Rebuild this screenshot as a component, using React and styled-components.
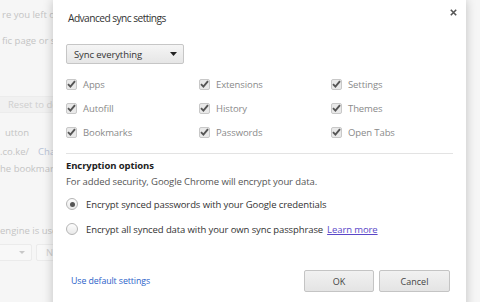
import React from "react";
import styled, { createGlobalStyle } from "styled-components";

const Global = createGlobalStyle`
  html, body { margin: 0; padding: 0; }
  body {
    background: #f5f5f5;
    font-family: "Open Sans", "Noto Sans", sans-serif;
  }
`;

const Screen = styled.div`
  position: relative;
  width: 480px;
  height: 302px;
  overflow: hidden;
  background: #f6f6f6;
`;

/* ---------- faded page behind the dialog ---------- */
const BackPage = styled.div`
  display: flex;
  flex-direction: column;
  width: 140px;
  padding-top: 9px;
  font-size: 9.5px;
  line-height: 12px;
  color: #c4c4c4;
  white-space: nowrap;
`;

const BackLine = styled.div`
  margin-top: ${(p) => p.$mt || 0}px;
  padding-left: ${(p) => p.$indent || 0}px;
`;

const BackLink = styled.span`
  color: #b9c3d6;
  margin-left: 9px;
`;

const BackButton = styled.div`
  margin-top: ${(p) => p.$mt || 0}px;
  height: 15px;
  line-height: 15px;
  background: #f1f1f1;
  border-top: 1px solid #ececec;
  border-bottom: 1px solid #ececec;
  padding-left: 8px;
  color: #cfcfcf;
`;

const BackControls = styled.div`
  display: flex;
  gap: 4px;
  margin-top: ${(p) => p.$mt || 0}px;
  margin-left: -6px;
`;

const BackSelect = styled.div`
  width: 38px;
  height: 17px;
  border: 1px solid #ebebeb;
  border-radius: 2px;
  background: #f8f8f8;
  display: flex;
  align-items: center;
  justify-content: flex-end;
  padding-right: 6px;
  box-sizing: border-box;
`;

const BackBtn = styled.div`
  width: 30px;
  height: 17px;
  border: 1px solid #ebebeb;
  border-radius: 2px;
  background: #f8f8f8;
  box-sizing: border-box;
  padding-left: 9px;
  line-height: 15px;
  color: #cfcfcf;
`;

/* ---------- dialog ---------- */
const Dialog = styled.div`
  position: absolute;
  left: 53px;
  top: 0;
  width: 413px;
  height: 320px;
  box-sizing: border-box;
  background: #fff;
  box-shadow: 0 0 10px rgba(0, 0, 0, 0.22);
  padding: 10px 13px 0 13px;
  display: flex;
  flex-direction: column;
  color: #333;
  font-size: 9.5px;
  letter-spacing: -0.1px;
`;

const Header = styled.div`
  display: flex;
  justify-content: space-between;
  align-items: flex-start;
`;

const Title = styled.div`
  font-size: 10.2px;
  letter-spacing: -0.55px;
  line-height: 16px;
  margin-left: 2px;
  color: #333;
`;

const Close = styled.svg`
  width: 7px;
  height: 7px;
  margin-top: -1px;
  margin-right: -4px;
`;

const Select = styled.div`
  margin-top: 18px;
  width: 118px;
  height: 20px;
  box-sizing: border-box;
  border: 1px solid #c6c6c6;
  border-radius: 2px;
  background: linear-gradient(#f5f5f5, #e6e6e6);
  display: flex;
  align-items: center;
  justify-content: space-between;
  padding: 0 6px 0 7px;
  color: #333;
`;

const Arrow = styled.svg`
  width: 7px;
  height: 4px;
`;

const Options = styled.div`
  margin-top: 8px;
  display: grid;
  grid-template-columns: 133px 132px 1fr;
  grid-auto-rows: 24px;
`;

const CheckItem = styled.label`
  display: flex;
  align-items: center;
  gap: 6px;
  color: #8a8a8a;
`;

const Box = styled.span`
  width: 11px;
  height: 11px;
  box-sizing: border-box;
  border: 1px solid #c8c8c8;
  border-radius: 2px;
  background: #e9e9e9;
  display: flex;
  align-items: center;
  justify-content: center;
`;

const Separator = styled.div`
  margin-top: 9px;
  height: 1px;
  background: #e3e3e3;
`;

const SectionTitle = styled.div`
  margin-top: 4px;
  line-height: 16px;
  font-weight: 700;
  color: #222;
`;

const Note = styled.div`
  line-height: 16px;
  color: #555;
`;

const RadioRow = styled.label`
  margin-top: ${(p) => p.$mt}px;
  height: 20px;
  display: flex;
  align-items: center;
  gap: 8px;
  color: #333;
`;

const Radio = styled.span`
  width: 12px;
  height: 12px;
  box-sizing: border-box;
  border-radius: 50%;
  border: 1px solid #b5b5b5;
  background: linear-gradient(#fdfdfd, #e9e9e9);
  display: flex;
  align-items: center;
  justify-content: center;
  &::after {
    content: "";
    width: 5px;
    height: 5px;
    border-radius: 50%;
    background: ${(p) => (p.$on ? "#555" : "transparent")};
  }
`;

const Link = styled.a`
  color: ${(p) => (p.$visited ? "#5a47c8" : "#2a62c9")};
  text-decoration: ${(p) => (p.$underline ? "underline" : "none")};
  margin-left: ${(p) => p.$ml || 0}px;
  font-size: ${(p) => p.$size || 9.5}px;
  cursor: pointer;
`;

const Footer = styled.div`
  margin-top: 31px;
  display: flex;
  align-items: center;
  justify-content: space-between;
  padding: 0 3px 0 5px;
`;

const Buttons = styled.div`
  display: flex;
  gap: 5px;
`;

const Button = styled.button`
  width: ${(p) => p.$w}px;
  height: 22px;
  box-sizing: border-box;
  border: 1px solid #c4c4c4;
  border-radius: 2px;
  background: linear-gradient(#f1f1f1, #e4e4e4);
  font-family: inherit;
  font-size: 9px;
  color: #444;
  padding: 0;
`;

const Check = () => (
  <svg width="9" height="8" viewBox="0 0 9 8">
    <path d="M1 4.2 L3.4 6.6 L8 1.2" fill="none" stroke="#555" strokeWidth="1.9" />
  </svg>
);

const items = [
  "Apps", "Extensions", "Settings",
  "Autofill", "History", "Themes",
  "Bookmarks", "Passwords", "Open Tabs",
];

export default function App() {
  return (
    <Screen>
      <Global />
      <BackPage>
        <BackLine $indent={2}>re you left off</BackLine>
        <BackLine $mt={14} $indent={2}>fic page or set</BackLine>
        <BackButton $mt={49}>Reset to defaults</BackButton>
        <BackLine $mt={14} $indent={5}>utton</BackLine>
        <BackLine $mt={7}>.co.ke/<BackLink>Change</BackLink></BackLine>
        <BackLine $mt={5}>he bookmark</BackLine>
        <BackLine $mt={50}>engine is used</BackLine>
        <BackControls $mt={7}>
          <BackSelect>
            <svg width="6" height="3" viewBox="0 0 6 3"><path d="M0 0h6L3 3z" fill="#c8c8c8" /></svg>
          </BackSelect>
          <BackBtn>N</BackBtn>
        </BackControls>
      </BackPage>

      <Dialog>
        <Header>
          <Title>Advanced sync settings</Title>
          <Close viewBox="0 0 7 7">
            <path d="M0.8 0.8 L6.2 6.2 M6.2 0.8 L0.8 6.2" stroke="#555" strokeWidth="1.6" />
          </Close>
        </Header>

        <Select>
          <span>Sync everything</span>
          <Arrow viewBox="0 0 7 4"><path d="M0 0h7L3.5 4z" fill="#222" /></Arrow>
        </Select>

        <Options>
          {items.map((t) => (
            <CheckItem key={t}>
              <Box><Check /></Box>
              {t}
            </CheckItem>
          ))}
        </Options>

        <Separator />
        <SectionTitle>Encryption options</SectionTitle>
        <Note>For added security, Google Chrome will encrypt your data.</Note>

        <RadioRow $mt={4}>
          <Radio $on />
          Encrypt synced passwords with your Google credentials
        </RadioRow>
        <RadioRow $mt={5}>
          <Radio />
          <span>
            Encrypt all synced data with your own sync passphrase
            <Link $visited $underline $ml={4}>Learn more</Link>
          </span>
        </RadioRow>

        <Footer>
          <Link $size={8.8}>Use default settings</Link>
          <Buttons>
            <Button $w={70}>OK</Button>
            <Button $w={71}>Cancel</Button>
          </Buttons>
        </Footer>
      </Dialog>
    </Screen>
  );
}
